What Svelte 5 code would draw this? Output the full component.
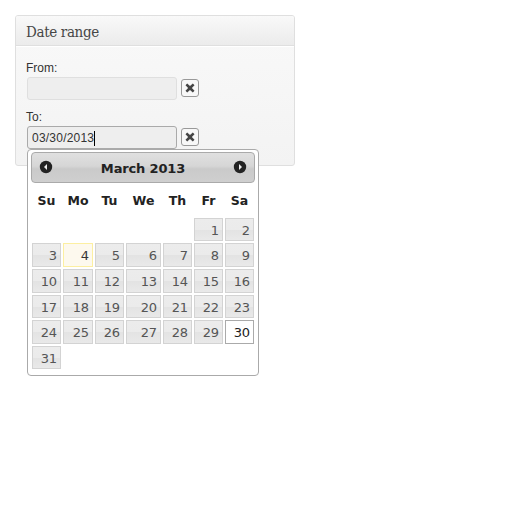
<script>
  const names = ['Su', 'Mo', 'Tu', 'We', 'Th', 'Fr', 'Sa'];
  const days = Array.from({ length: 31 }, (_, i) => i + 1);
  const fields = [
    { label: 'From:', value: '' },
    { label: 'To:', value: '03/30/2013' }
  ];
</script>

<main>
  <section class="panel">
    <h2><span>Date range</span></h2>
    <div class="body">
      {#each fields as field}
        <div class="field">
          <div class="label">{field.label}</div>
          <div class="row">
            <div class="input" class:focused={field.value}>
              {#if field.value}<span>{field.value}</span><i class="caret"></i>{/if}
            </div>
            <button aria-label="Clear">
              <svg width="10" height="10" viewBox="0 0 10 10"><path d="M2.2 .6 5 3.1 7.8 .6 9.5 2.3 6.9 5 9.5 7.7 7.8 9.4 5 6.9 2.2 9.4 .5 7.7 3.1 5 .5 2.3Z" fill="#454545" /></svg>
            </button>
          </div>
        </div>
      {/each}
    </div>
  </section>

  <div class="picker">
    <header>
      <svg width="12" height="12" viewBox="0 0 12 12"><circle cx="6" cy="6" r="6.2" fill="#222" /><path d="M7 3v6L4 6Z" fill="#eee" /></svg>
      <span class="title">March 2013</span>
      <svg width="12" height="12" viewBox="0 0 12 12"><circle cx="6" cy="6" r="6.2" fill="#222" /><path d="M5 3v6l3-3Z" fill="#eee" /></svg>
    </header>
    <div class="names">
      {#each names as name}<b>{name}</b>{/each}
    </div>
    <div class="days">
      {#each days as day}
        <div class="day" class:first={day === 1} class:today={day === 4} class:selected={day === 30}><span>{day}</span></div>
      {/each}
    </div>
  </div>
</main>

<style>
  :global(body) { margin: 0; background: #fff; }
  main { position: relative; box-sizing: border-box; width: 530px; height: 530px; padding: 15px; }
  .panel {
    box-sizing: border-box; width: 280px; height: 151px;
    border: 1px solid #dfdfdf; border-radius: 3px;
    background: linear-gradient(#f9f9f9, #f3f3f3);
  }
  h2 {
    box-sizing: border-box; height: 30px; margin: 0; padding-left: 10px;
    border-bottom: 1px solid #dfdfdf; border-radius: 2px 2px 0 0;
    box-shadow: 0 1px 0 #fff;
    background: linear-gradient(#f9f9f9, #ebebeb);
    color: #464646; font: normal 15px/32px "DejaVu Serif Condensed", "DejaVu Serif", serif;
    font-stretch: condensed; letter-spacing: -.35px; white-space: nowrap;
  }
  .body { padding: 14px 0 0 10px; }
  .field { height: 49px; font: 12px/15px "Liberation Sans", Arial, sans-serif; color: #333; }
  .label { height: 17px; line-height: 16px; }
  .row { display: flex; align-items: flex-start; height: 23px; padding-left: 1px; gap: 4px; }
  .input {
    box-sizing: border-box; display: flex; align-items: center;
    width: 150px; height: 23px; padding: 1px 0 0 4px; letter-spacing: .22px;
    border: 1px solid #dfdfdf; border-radius: 3px; background: #eee;
  }
  .focused { border-color: #aaa; }
  .caret { width: 1px; height: 15px; background: #000; }
  button {
    box-sizing: border-box; display: flex; align-items: center; justify-content: center;
    width: 18px; height: 18px; margin-top: 2px; padding: 0;
    border: 1px solid #999; border-radius: 3px; background: #f8f8f8;
  }
  .picker {
    position: absolute; left: 27px; top: 149px; box-sizing: border-box;
    width: 232px; height: 227px; padding: 2px 3px;
    border: 1px solid #aaa; border-radius: 4px; background: #fff;
    font-family: "DejaVu Sans", Verdana, sans-serif; font-size: 13px; color: #222;
  }
  header {
    box-sizing: border-box; display: flex; align-items: center; justify-content: space-between;
    height: 31px; padding: 0 8px; border: 1px solid #aaa; border-radius: 4px;
    background: linear-gradient(#e0e0e0, #d6d6d6 45%, #cacaca 55%, #cfcfcf);
  }
  header svg { margin-top: -1px; overflow: visible; }
  .title { padding-top: 2px; font-weight: bold; font-size: 13px; letter-spacing: -.15px; }
  .names, .days {
    display: grid; grid-template-columns: 29px 30px 29px 35px 29px 29px 29px; column-gap: 2px; padding-left: 1px;
  }
  .names { height: 35px; line-height: 35px; text-align: center; }
  .names b { font-size: 12.5px; }
  .days { grid-template-rows: 23px 24px 24px 23px 24px 23px; row-gap: 2px; }
  .day {
    display: flex; align-items: center; justify-content: flex-end; padding: 1px 3px 0 0; letter-spacing: -.1px;
    border: 1px solid #d3d3d3; color: #555;
    background: linear-gradient(#ececec, #ebebeb 50%, #e3e3e3 51%, #e9e9e9);
  }
  .first { grid-column: 6; }
  .today { border-color: #fcefa1; background: #fdf9ee; color: #363636; }
  .selected { border-color: #aaa; background: #fff; color: #212121; }
</style>
